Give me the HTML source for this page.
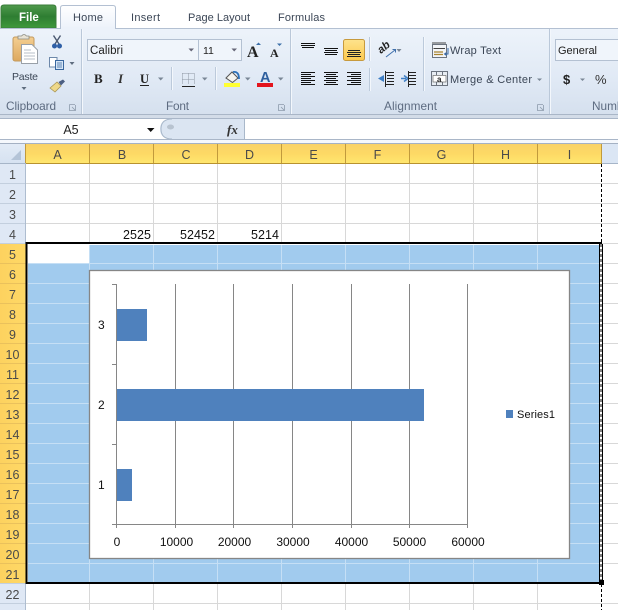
<!DOCTYPE html>
<html>
<head>
<meta charset="utf-8">
<style>
html,body{margin:0;padding:0;background:#fff}
body{width:618px;height:610px;overflow:hidden}
svg{display:block}
text{font-family:"Liberation Sans",sans-serif;fill:#3b4656}
.r{font-size:11.5px}
.g{font-size:11.8px;fill:#5d6b80}
.h{font-size:12.5px;fill:#4a4a4a;text-anchor:middle}
</style>
</head>
<body>
<svg width="618" height="610" viewBox="0 0 618 610" xmlns="http://www.w3.org/2000/svg">
<defs>
<linearGradient id="rb" x1="0" y1="0" x2="0" y2="1"><stop offset="0" stop-color="#edf3fa"/><stop offset=".6" stop-color="#e0e9f5"/><stop offset="1" stop-color="#d5e0ee"/></linearGradient>
<linearGradient id="file" x1="0" y1="0" x2="0" y2="1"><stop offset="0" stop-color="#4f9a4c"/><stop offset=".5" stop-color="#2e7d32"/><stop offset="1" stop-color="#3f9a3c"/></linearGradient>
<linearGradient id="tab" x1="0" y1="0" x2="0" y2="1"><stop offset="0" stop-color="#fff"/><stop offset="1" stop-color="#ecf2fa"/></linearGradient>
<linearGradient id="hd" x1="0" y1="0" x2="0" y2="1"><stop offset="0" stop-color="#f9d267"/><stop offset=".5" stop-color="#fdd965"/><stop offset="1" stop-color="#ffe66e"/></linearGradient>
<linearGradient id="rh" x1="0" y1="0" x2="1" y2="0"><stop offset="0" stop-color="#fdd25f"/><stop offset="1" stop-color="#fed866"/></linearGradient>
<linearGradient id="hi" x1="0" y1="0" x2="0" y2="1"><stop offset="0" stop-color="#fde38d"/><stop offset="1" stop-color="#fcc94e"/></linearGradient>
<linearGradient id="clip" x1="0" y1="0" x2="0" y2="1"><stop offset="0" stop-color="#f4cf92"/><stop offset="1" stop-color="#dda85e"/></linearGradient>
<linearGradient id="bl" x1="0" y1="0" x2="0" y2="1"><stop offset="0" stop-color="#e2ebf6"/><stop offset="1" stop-color="#d6e2f1"/></linearGradient>
</defs>

<!-- tab strip -->
<rect width="618" height="28" fill="#fff"/>
<path d="M1 28V8Q1 5 4 5H53Q56 5 56 8V28Z" fill="url(#file)" stroke="#3a7d3a"/>
<text x="19" y="21" style="font-size:11.5px;font-weight:bold;fill:#fff">File</text>

<!-- ribbon -->
<rect x="0" y="28" width="618" height="87" fill="url(#rb)"/>
<path d="M0 28.500H618" stroke="#b3c0d2"/>
<path d="M60.500 29V8Q60.500 5.500 63 5.500H113Q115.500 5.500 115.500 8V29" fill="url(#tab)" stroke="#b3c0d2"/>
<rect x="61" y="27" width="54" height="3" fill="#ecf2fa"/>
<text x="73" y="21" textLength="30" style="font-size:11px">Home</text>
<text x="131" y="21" textLength="29" style="font-size:11px">Insert</text>
<text x="188" y="21" textLength="62" style="font-size:11px">Page Layout</text>
<text x="278" y="21" textLength="47" style="font-size:11px">Formulas</text>
<path d="M0 114.500H618" stroke="#a9b6c7"/>
<path d="M81.500 29V114M290.500 29V114M549.500 29V114" stroke="#bac8d9"/>
<path d="M82.500 29V114M291.500 29V114M550.500 29V114" stroke="#f3f7fc"/>

<!-- clipboard -->
<rect x="13" y="37" width="21" height="24" rx="2" fill="url(#clip)" stroke="#c39a5e"/>
<path d="M18 39V36H21.500Q24 33 26.500 36H29V39Z" fill="#e8e3d5" stroke="#8b8b80" stroke-width=".8"/>
<path d="M21.500 44.500H32L37.500 50V63.500H21.500Z" fill="#fff" stroke="#99a0a8"/>
<path d="M24 50H31M24 53H35M24 56H35M24 59H35" stroke="#b7bfc9"/>
<text x="12" y="80" textLength="26" style="font-size:10.500px">Paste</text>
<path d="M21.500 87H26.500L24 90Z" fill="#5f6d7f"/>
<path d="M53.500 35.500L59 44M60.500 35.500L55 44" stroke="#4a5870" stroke-width="1.400"/>
<circle cx="54.500" cy="46" r="2.500" fill="#2f5fa6"/><circle cx="59.500" cy="46" r="2.500" fill="#2f5fa6"/>
<path d="M49.500 57.500H57V67H49.500Z" fill="#fff" stroke="#6d88aa"/>
<path d="M55.500 60.500H63.500V69.500H55.500Z" fill="#d7e6f6" stroke="#39679f"/>
<path d="M57 63H62M57 65H62M57 67H62" stroke="#39679f" stroke-width=".8"/>
<path d="M69.500 62H74.500L72 65Z" fill="#5f6d7f"/>
<path d="M50 88L57 82L61 86L55 92Z" fill="#eed88a" stroke="#a89454" stroke-width=".8"/>
<path d="M58.500 82L63 79.500L65 81.500L61 85.500Z" fill="#4c5f82"/>

<text class="g" x="6" y="110" textLength="50">Clipboard</text>
<path d="M69.500 104.500H75M69.500 104.500V110.500H75.500V105M72 107L75 110" stroke="#8d9bac" fill="none" stroke-width=".8"/>

<!-- font -->
<rect x="87.500" y="39.500" width="111" height="21" fill="#f0f5fb" stroke="#b4c1d2"/>
<rect x="198.500" y="39.500" width="43" height="21" fill="#f0f5fb" stroke="#b4c1d2"/>
<text x="90" y="54" textLength="33" style="font-size:11.500px;fill:#222">Calibri</text>
<text x="203" y="54" style="font-size:10.500px;fill:#222">11</text>
<path d="M188.500 48.500H194L191.200 51.500Z" fill="#667"/><path d="M231.500 48.500H237L234.200 51.500Z" fill="#667"/>
<text x="247" y="57" style="font-family:'Liberation Serif',serif;font-size:16px;font-weight:bold;fill:#222">A</text>
<path d="M256 45L258.500 42.500L261 45Z" fill="#3b6ea8"/>
<text x="270" y="57" style="font-family:'Liberation Serif',serif;font-size:12px;font-weight:bold;fill:#222">A</text>
<path d="M277 43.500H282L279.500 46Z" fill="#3b6ea8"/>

<text x="94" y="83" style="font-family:'Liberation Serif',serif;font-size:13px;font-weight:bold;fill:#222">B</text>
<text x="118" y="83" style="font-family:'Liberation Serif',serif;font-size:13px;font-style:italic;font-weight:bold;fill:#333">I</text>
<text x="140" y="83" style="font-family:'Liberation Serif',serif;font-size:12.500px;font-weight:bold;fill:#222">U</text>
<path d="M140 85.500H149" stroke="#222"/>
<path d="M158 77.500H163.500L160.700 80.500Z" fill="#7a8796"/>
<path d="M171.500 67V90" stroke="#bccadb"/><path d="M172.500 67V90" stroke="#f3f7fc"/>
<path d="M182.500 73.500H194.500V84M182.500 73.500V84M188.500 73.500V84M182.500 79.500H194.500" stroke="#8d96a2" stroke-dasharray="1 1" fill="none"/>
<path d="M182 86.500H195" stroke="#222"/>
<path d="M202 77.500H207.500L204.700 80.500Z" fill="#7a8796"/>
<path d="M215.500 67V90" stroke="#bccadb"/><path d="M216.500 67V90" stroke="#f3f7fc"/>
<path d="M226 78L232 72L238 78L232.500 82.500Z" fill="#f5f5f0" stroke="#555"/>
<path d="M233 72Q239 71 239 79" stroke="#2c71b8" stroke-width="1.800" fill="none"/>
<rect x="224" y="83" width="16" height="4" fill="#ffff33"/>
<path d="M245 77.500H250.500L247.700 80.500Z" fill="#7a8796"/>
<text x="260" y="82" style="font-size:14.500px;font-weight:bold;fill:#2e5f9e">A</text>
<rect x="257" y="83" width="16" height="4" fill="#e3141d"/>
<path d="M278 77.500H283.500L280.700 80.500Z" fill="#7a8796"/>
<text class="g" x="166" y="110" textLength="23">Font</text>
<path d="M278.500 104.500H284M278.500 104.500V110.500H284.500V105M281 107L284 110" stroke="#8d9bac" fill="none" stroke-width=".8"/>

<!-- alignment -->
<path d="M301 43.500H315M301 45.500H315M302 47.500H314" stroke="#111"/>
<path d="M324 48.500H338M325 50.500H337M324 52.500H338M325 54.500H337" stroke="#111"/>
<rect x="343.500" y="39.500" width="21" height="21" rx="2" fill="url(#hi)" stroke="#c79a3d"/>
<path d="M348 50.500H360M347 52.500H361M348 54.500H360M347 56.500H361" stroke="#222"/>
<path d="M369.500 37V61" stroke="#bccadb"/><path d="M370.500 37V61" stroke="#f3f7fc"/>
<text transform="translate(381,54) rotate(-40)" style="font-size:11px;font-weight:bold;font-style:italic;fill:#222">ab</text>
<path d="M386 57L395 50M392.500 49.500H395.500V52.500" stroke="#3f70ac" fill="none"/>
<path d="M396.500 49H401.500L399 52Z" fill="#7a8796"/>
<path d="M301 72.500H315M301 74.500H311M301 76.500H315M301 78.500H311M301 80.500H315M301 82.500H311M301 84.500H315" stroke="#111"/>
<path d="M324 72.500H338M326 74.500H336M324 76.500H338M326 78.500H336M324 80.500H338M326 82.500H336M324 84.500H338" stroke="#111"/>
<path d="M347 72.500H361M351 74.500H361M347 76.500H361M351 78.500H361M347 80.500H361M351 82.500H361M347 84.500H361" stroke="#111"/>
<path d="M369.500 68V91" stroke="#bccadb"/><path d="M370.500 68V91" stroke="#f3f7fc"/>
<path d="M378 78.500L384 75V82Z" fill="#3f7fc5"/>
<path d="M386 72.500H394M387 75.500H394M387 78.500H394M387 81.500H394M386 84.500H394M385.500 71V87" stroke="#222"/>
<path d="M401 78.500H406M404 75.500L408 78.500L404 81.500" stroke="#3f7fc5" fill="none" stroke-width="1.500"/>
<path d="M409 72.500H416M409 75.500H416M409 78.500H416M409 81.500H416M409 84.500H416M408.500 71V87" stroke="#222"/>
<path d="M423.500 37V91" stroke="#bccadb"/><path d="M424.500 37V91" stroke="#f3f7fc"/>
<!-- wrap icon -->
<path d="M432.500 44.500H446.500V57.500H432.500Z" fill="#f3f5f8" stroke="#6c7480"/>
<path d="M432 43H446M433.500 48.500H445" stroke="#444"/>
<path d="M434 52H443M434 54.500H443" stroke="#a8842e" stroke-width="1.300"/>
<path d="M448 48V54H445M446.500 52.500L444.500 54L446.500 55.500" stroke="#3a6aa6" fill="none"/>
<text x="450" y="54" textLength="51" style="font-size:11px">Wrap Text</text>
<!-- merge icon -->
<rect x="431.500" y="71.500" width="16" height="14" fill="#e8edf3" stroke="#6c7480"/>
<path d="M436.500 72V75M442.500 72V75M436.500 82V85M442.500 82V85" stroke="#6c7480"/>
<rect x="433" y="75.500" width="13" height="6.500" fill="#fff" stroke="#555" stroke-width=".6"/>
<text x="437" y="82" style="font-size:8px;font-weight:bold;fill:#222">a</text>
<text x="450" y="83" textLength="82" style="font-size:11px">Merge &amp; Center</text>
<path d="M537 78.500H542L539.500 81Z" fill="#7a8796"/>
<text class="g" x="384" y="110" textLength="53">Alignment</text>
<path d="M537.500 104.500H543M537.500 104.500V110.500H543.500V105M540 107L543 110" stroke="#8d9bac" fill="none" stroke-width=".8"/>

<!-- number -->
<rect x="555.500" y="39.500" width="70" height="21" fill="#f0f5fb" stroke="#b4c1d2"/>
<text x="558" y="54" textLength="39" style="font-size:11px;fill:#222">General</text>
<text x="563" y="84" style="font-size:13px;font-weight:bold;fill:#222">$</text>
<path d="M580 78.500H585L582.500 81Z" fill="#7a8796"/>
<text x="595" y="84" style="font-size:13px;fill:#333">%</text>
<text class="g" x="592" y="110">Numb</text>

<!-- formula bar -->
<rect x="0" y="115" width="618" height="29" fill="#fff"/>
<rect x="0" y="115" width="618" height="3" fill="#d3dce8"/>
<path d="M0 118.500H618" stroke="#a9b6c8"/>
<path d="M160 139V119H244.500V139Z" fill="#dbe5f2"/>
<path d="M172 119Q160 119 160 129Q160 139 172 139H160V119Z" fill="#fff"/>
<path d="M172 119Q161 119 161 129Q161 139 172 139" stroke="#a9b8ca" fill="none"/>
<path d="M244.500 119V139" stroke="#a9b8ca"/>
<path d="M0 139.500H618" stroke="#a9b6c8"/>
<rect x="0" y="140" width="618" height="3" fill="#f5f8fc"/>
<path d="M0 143.500H618" stroke="#a4b1c3"/>
<text x="71" y="134" text-anchor="middle" style="font-size:12.500px;fill:#222">A5</text>
<path d="M147 128H154.500L150.700 132Z" fill="#111"/>
<ellipse cx="170.500" cy="127" rx="3.500" ry="2.500" fill="#b8c3d0"/>
<text x="227" y="134" style="font-family:'Liberation Serif',serif;font-style:italic;font-weight:bold;font-size:13px;fill:#333">fx</text>

<!-- sheet bg -->
<rect x="0" y="144" width="618" height="466" fill="#fff"/>

<!-- corner + col headers -->
<rect x="0" y="144" width="26" height="19" fill="url(#bl)"/>
<path d="M21 150V160H11Z" fill="#b4c4d7"/>
<rect x="26" y="144" width="576" height="19" fill="url(#hd)"/>
<rect x="602" y="144" width="16" height="19" fill="#dbe6f4"/>
<path d="M25.500 144V163M89.500 144V163M153.500 144V163M217.500 144V163M281.500 144V163M345.500 144V163M409.500 144V163M473.500 144V163M537.500 144V163M601.500 144V163" stroke="#c19a3c"/>
<path d="M26 163.500H602" stroke="#b8922f"/>
<path d="M0 163.500H26M602 163.500H618" stroke="#a6b5c8"/>
<text class="h" x="57.500" y="159">A</text><text class="h" x="122" y="159">B</text><text class="h" x="186" y="159">C</text><text class="h" x="249.500" y="159">D</text><text class="h" x="313.500" y="159">E</text><text class="h" x="377.500" y="159">F</text><text class="h" x="441.500" y="159">G</text><text class="h" x="505.500" y="159">H</text><text class="h" x="569.500" y="159">I</text>

<!-- row headers -->
<rect x="0" y="164" width="26" height="80" fill="#dfe8f5"/>
<rect x="0" y="244" width="26" height="340" fill="url(#rh)"/>
<rect x="0" y="584" width="26" height="26" fill="#dfe8f5"/>
<path d="M0 183.500H26M0 203.500H26M0 223.500H26M0 243.500H26M0 583.500H26M0 603.500H26" stroke="#c3cfde"/>
<path d="M0 263.500H26M0 283.500H26M0 303.500H26M0 323.500H26M0 343.500H26M0 363.500H26M0 383.500H26M0 403.500H26M0 423.500H26M0 443.500H26M0 463.500H26M0 483.500H26M0 503.500H26M0 523.500H26M0 543.500H26M0 563.500H26" stroke="#eac15c"/>
<path d="M25.500 164V244M25.500 584V610" stroke="#aebdd0"/>
<text class="h" x="12.500" y="179">1</text><text class="h" x="12.500" y="199">2</text><text class="h" x="12.500" y="219">3</text><text class="h" x="12.500" y="239">4</text>
<text class="h" x="12.500" y="259">5</text><text class="h" x="12.500" y="279">6</text><text class="h" x="12.500" y="299">7</text><text class="h" x="12.500" y="319">8</text><text class="h" x="12.500" y="339">9</text>
<text class="h" x="12.500" y="359">10</text><text class="h" x="12.500" y="379">11</text><text class="h" x="12.500" y="399">12</text><text class="h" x="12.500" y="419">13</text><text class="h" x="12.500" y="439">14</text><text class="h" x="12.500" y="459">15</text><text class="h" x="12.500" y="479">16</text><text class="h" x="12.500" y="499">17</text><text class="h" x="12.500" y="519">18</text><text class="h" x="12.500" y="539">19</text><text class="h" x="12.500" y="559">20</text><text class="h" x="12.500" y="579">21</text><text class="h" x="12.500" y="599">22</text>

<!-- grid -->
<path d="M26 183.500H618M26 203.500H618M26 223.500H618M26 243.500H618M602 263.500H618M602 283.500H618M602 303.500H618M602 323.500H618M602 343.500H618M602 363.500H618M602 383.500H618M602 403.500H618M602 423.500H618M602 443.500H618M602 463.500H618M602 483.500H618M602 503.500H618M602 523.500H618M602 543.500H618M602 563.500H618M26 603.500H618" stroke="#d8d8d8"/>
<path d="M89.500 164V244M153.500 164V244M217.500 164V244M281.500 164V244M345.500 164V244M409.500 164V244M473.500 164V244M537.500 164V244M89.500 584V610M153.500 584V610M217.500 584V610M281.500 584V610M345.500 584V610M409.500 584V610M473.500 584V610M537.500 584V610" stroke="#d8d8d8"/>
<path d="M601.500 164V610" stroke="#000" stroke-dasharray="3 2"/>

<!-- selection fill -->
<rect x="28" y="245" width="571" height="337" fill="#a1cbee"/>
<rect x="27" y="245" width="62" height="18" fill="#fff"/>
<path d="M28 263.500H599M28 283.500H599M28 303.500H599M28 323.500H599M28 343.500H599M28 363.500H599M28 383.500H599M28 403.500H599M28 423.500H599M28 443.500H599M28 463.500H599M28 483.500H599M28 503.500H599M28 523.500H599M28 543.500H599M28 563.500H599" stroke="#c5dff5"/>
<path d="M89.500 245V582M153.500 245V582M217.500 245V582M281.500 245V582M345.500 245V582M409.500 245V582M473.500 245V582M537.500 245V582" stroke="#c5dff5"/>

<!-- selection border -->
<path d="M26 243H602M26 583H602" stroke="#000" stroke-width="2"/>
<path d="M26.500 242V584" stroke="#000" stroke-width="2"/>
<rect x="599" y="244" width="4" height="340" fill="#fff"/>
<path d="M599.500 244V583" stroke="#000"/>
<path d="M602.500 244V583" stroke="#000"/>
<path d="M601 244V583" stroke="#000" stroke-dasharray="3 2"/>
<rect x="599" y="580" width="5" height="5" fill="#000"/>

<!-- values -->
<text x="123" y="239" textLength="28" style="font-size:12.500px;fill:#111">2525</text>
<text x="180" y="239" textLength="35" style="font-size:12.500px;fill:#111">52452</text>
<text x="251" y="239" textLength="28" style="font-size:12.500px;fill:#111">5214</text>

<!-- chart -->
<rect x="89.500" y="270.500" width="480" height="288" fill="#fff" stroke="#868686" stroke-width="1.300"/>
<path d="M175.500 284V528M233.500 284V528M292.500 284V528M351.500 284V528M409.500 284V528M467.500 284V528" stroke="#868686"/>
<path d="M116.500 284V528" stroke="#868686"/>
<path d="M112 284.500H117M112 364.500H117M112 444.500H117M112 524.500H468" stroke="#868686"/>
<rect x="117" y="309" width="30" height="32" fill="#4f81bd"/>
<rect x="117" y="389" width="307" height="32" fill="#4f81bd"/>
<rect x="117" y="469" width="15" height="32" fill="#4f81bd"/>
<text x="98" y="329" style="font-size:12px;fill:#111">3</text>
<text x="98" y="409" style="font-size:12px;fill:#111">2</text>
<text x="98" y="489" style="font-size:12px;fill:#111">1</text>
<g style="font-size:12px" text-anchor="middle">
<text x="117" y="546" style="fill:#111">0</text>
<text x="176.500" y="546" style="fill:#111">10000</text>
<text x="234.500" y="546" style="fill:#111">20000</text>
<text x="293" y="546" style="fill:#111">30000</text>
<text x="351.500" y="546" style="fill:#111">40000</text>
<text x="409.500" y="546" style="fill:#111">50000</text>
<text x="468" y="546" style="fill:#111">60000</text>
</g>
<rect x="506" y="410" width="7" height="8" fill="#4f81bd"/>
<text x="517" y="418" textLength="38" style="font-size:11px;fill:#111">Series1</text>
</svg>
</body>
</html>
